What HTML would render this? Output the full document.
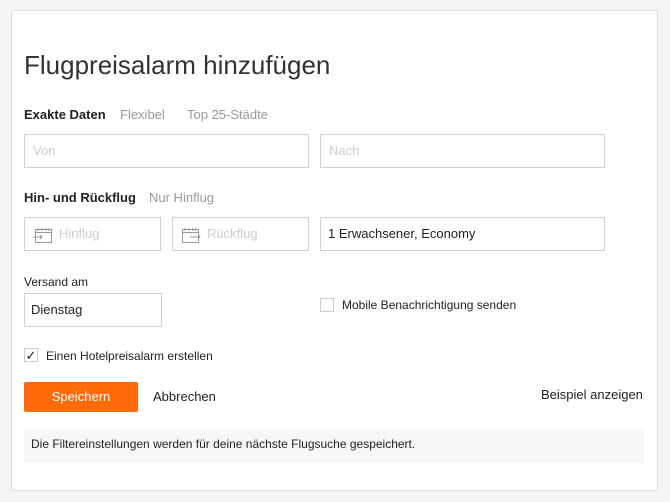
<!DOCTYPE html>
<html><head><meta charset="utf-8"><style>
body{margin:0;width:670px;height:502px;background:#f5f5f5;font-family:"Liberation Sans",Arial,sans-serif;color:#222;position:relative;overflow:hidden}
.card{position:absolute;left:11px;top:10px;width:647px;height:481px;background:#fff;border:1px solid #dcdcdc;box-sizing:border-box}
.a{position:absolute;white-space:nowrap}
.in{position:absolute;border:1px solid #cfcfcf;box-sizing:border-box;height:34px;background:#fff;font-size:13px;color:#ccc;padding-left:8px;line-height:32px}
.cal{position:absolute;left:8px;top:8px}
</style></head><body>
<div class="card"></div>
<div class="a" style="left:24px;top:50px;font-size:26px;color:#333;font-weight:300">Flugpreisalarm hinzufügen</div>
<div class="a" style="left:24px;top:107px;font-size:13px;font-weight:bold">Exakte Daten</div>
<div class="a" style="left:120px;top:107px;font-size:13px;color:#999">Flexibel</div>
<div class="a" style="left:187px;top:107px;font-size:13px;color:#999">Top 25-Städte</div>
<div class="in" style="left:24px;top:134px;width:285px">Von</div>
<div class="in" style="left:320px;top:134px;width:285px">Nach</div>
<div class="a" style="left:24px;top:190px;font-size:13px;font-weight:bold">Hin- und Rückflug</div>
<div class="a" style="left:149px;top:190px;font-size:13px;color:#999">Nur Hinflug</div>
<div class="in" style="left:24px;top:217px;width:137px;padding-left:34px"><svg class="cal" width="20" height="18" viewBox="0 0 20 18" fill="none" stroke="#999" stroke-width="1"><rect x="2.5" y="3.5" width="16" height="13"/><path d="M2.5 6.5h16M5 2v3M9 2v3M13 2v3M16 2v3M0 11h9M7 9l2 2-2 2"/></svg>Hinflug</div>
<div class="in" style="left:172px;top:217px;width:137px;padding-left:34px"><svg class="cal" width="20" height="18" viewBox="0 0 20 18" fill="none" stroke="#999" stroke-width="1"><rect x="1.5" y="3.5" width="16" height="13"/><path d="M1.5 6.5h16M4 2v3M8 2v3M12 2v3M15 2v3M9 11h10M17 9l2 2-2 2"/></svg>Rückflug</div>
<div class="in" style="left:320px;top:217px;width:285px;color:#222;padding-left:7px">1 Erwachsener, Economy</div>
<div class="a" style="left:24px;top:275px;font-size:12px">Versand am</div>
<div class="in" style="left:24px;top:293px;width:138px;color:#222;padding-left:6px">Dienstag</div>
<div class="a" style="left:320px;top:298px;width:14px;height:14px;border:1px solid #ccc;box-sizing:border-box"></div>
<div class="a" style="left:342px;top:298px;font-size:12px">Mobile Benachrichtigung senden</div>
<div class="a" style="left:24px;top:348px;width:14px;height:14px;border:1px solid #ccc;box-sizing:border-box;font-size:13px;line-height:13px;text-align:center">✓</div>
<div class="a" style="left:46px;top:349px;font-size:12px">Einen Hotelpreisalarm erstellen</div>
<div class="a" style="left:24px;top:382px;width:114px;height:30px;background:#ff6a0a;border-radius:2px;color:#fff;font-size:13px;text-align:center;line-height:30px">Speichern</div>
<div class="a" style="left:153px;top:389px;font-size:13px">Abbrechen</div>
<div class="a" style="left:541px;top:387px;font-size:13px">Beispiel anzeigen</div>
<div class="a" style="left:24px;top:430px;width:620px;height:33px;background:#f7f7f7"></div>
<div class="a" style="left:31px;top:437px;font-size:12px">Die Filtereinstellungen werden für deine nächste Flugsuche gespeichert.</div>
</body></html>
